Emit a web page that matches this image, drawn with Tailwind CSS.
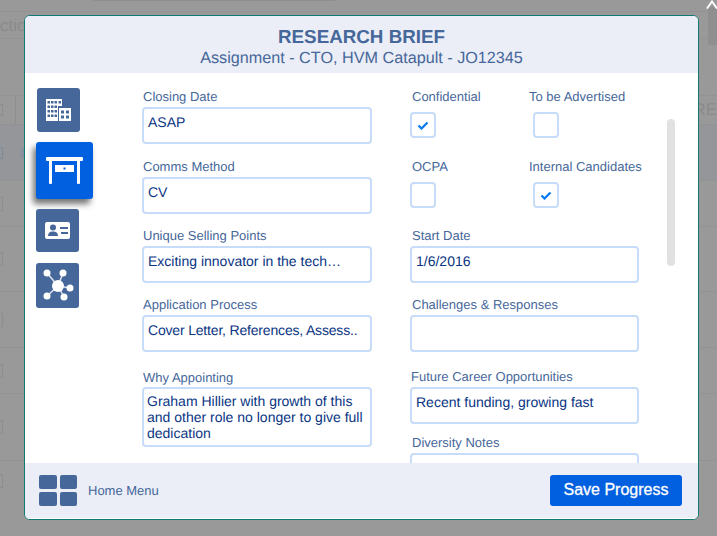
<!DOCTYPE html>
<html>
<head>
<meta charset="utf-8">
<script src="https://cdn.jsdelivr.net/npm/@tailwindcss/browser@4"></script>
</head>
<body class="bg-[#999999] font-['Liberation_Sans',Arial,sans-serif] overflow-hidden [text-rendering:geometricPrecision]">
<div class="relative w-[717px] h-[536px] overflow-hidden">

    <!-- faded page behind the modal -->
    <div class="h-[536px] text-[#8b8b8b]">
        <div class="h-[12px] border-b border-[#939393]"><div class="w-[242px] h-[1px] ml-[93px] bg-[#8e8e8e]"></div></div>
        <div class="h-[27px] border-b border-[#939393] flex justify-between text-[17px] leading-[27px]">
            <span>ction</span>
            <div class="w-[9px] h-[38px] -mt-[5px] rounded-bl-[3px] bg-[#8f8f8f]"></div>
        </div>
        <div class="h-[57px] border-b border-[#939393]"></div>
        <div class="h-[29px] border-b border-[#939393] flex justify-between text-[17px] leading-[27px]">
            <div class="w-[16px] border-r border-[#8e8e8e] flex items-center"><div class="w-[3px] h-[12px] border border-l-0 border-[#8e8e8e]"></div></div>
            <span>RE</span>
        </div>
        <div class="h-[56px] border-b border-[#939393] bg-[#949699] flex items-center gap-[18px]">
            <div class="w-[3px] h-[12px] border border-l-0 border-[#7f8a9a]"></div>
            <div class="w-[5px] h-[10px] bg-[#87909c]"></div>
        </div>
        <div class="h-[46px] border-b border-[#939393] flex items-center"><div class="w-[3px] h-[14px] border border-l-0 border-[#8e8e8e]"></div></div>
        <div class="h-[65px] border-b border-[#939393] flex items-center"><div class="w-[3px] h-[14px] border border-l-0 border-[#8e8e8e]"></div></div>
        <div class="h-[56px] border-b border-[#939393] flex items-center"><div class="w-[3px] h-[14px] border border-l-0 border-[#8e8e8e]"></div></div>
        <div class="h-[46px] border-b border-[#939393] flex items-center"><div class="w-[3px] h-[14px] border border-l-0 border-[#8e8e8e]"></div></div>
        <div class="h-[67px] border-b border-[#939393] flex items-center"><div class="w-[3px] h-[14px] border border-l-0 border-[#8e8e8e]"></div></div>
        <div class="h-[40px] flex items-center"><div class="w-[3px] h-[14px] border border-l-0 border-[#8e8e8e]"></div></div>
    </div>

    <!-- scroll-to-top arrow, top right of the page -->
    <svg class="absolute left-[706px] top-0" width="11" height="9" viewBox="0 0 11 9"><path d="M1 8.500L6 1.500L11 8.500" fill="none" stroke="#fff" stroke-width="2"/></svg>

    <!-- modal -->
    <div class="absolute left-[24px] top-[15px] w-[675px] h-[505px] bg-white border border-[#0f7a72] rounded-[6px] overflow-hidden flex flex-col">
        <div class="h-[57px] shrink-0 bg-[#ebeef7] text-center text-[#46679a]">
            <h1 class="text-[18.800px] font-bold leading-5 pt-[11px]">RESEARCH BRIEF</h1>
            <p class="text-[16.200px] leading-5 mt-[1px]">Assignment - CTO, HVM Catapult - JO12345</p>
        </div>

        <div class="relative h-[390px] shrink-0 overflow-hidden flex">
            <!-- side nav -->
            <div class="w-[117px] shrink-0 pt-[15px] pl-[11px] flex flex-col items-start">
                <div class="w-[43px] h-[44px] ml-[1px] rounded-[3px] bg-[#46679a] flex items-center justify-center">
                    <svg width="25" height="22" viewBox="0 0 25 22" fill="#fff">
                        <path fill-rule="evenodd" d="M0 0H16V7H12V22H0ZM1.500 2H4V4.500H1.500ZM5 2H7.500V4.500H5ZM8.500 2H11V4.500H8.500ZM12.500 2H15V4.500H12.500ZM1.500 6.500H4V9H1.500ZM5 6.500H7.500V9H5ZM8.500 6.500H11V9H8.500ZM1.500 11H4V13.500H1.500ZM5 11H7.500V13.500H5ZM8.500 11H11V13.500H8.500ZM1.500 15.500H4V18H1.500ZM5 15.500H7.500V18H5ZM8.500 15.500H11V18H8.500Z"/>
                        <path fill-rule="evenodd" d="M13 9H25V22H13ZM15 11.500H18V14.500H15ZM20 11.500H23V14.500H20ZM15 16.500H18V19.500H15ZM20 16.500H23V19.500H20Z"/>
                    </svg>
                </div>
                <div class="w-[57px] h-[57px] mt-[10px] rounded-[3px] bg-[#0060df] shadow-[-3px_5px_6px_rgba(0,0,0,0.55)] flex items-center justify-center">
                    <svg width="37" height="27" viewBox="0 0 37 27" fill="#fff">
                        <rect x="0" y="0" width="37" height="4" rx="1"/>
                        <rect x="3" y="3" width="3" height="24" rx="1"/>
                        <rect x="31" y="3" width="3" height="24" rx="1"/>
                        <path fill-rule="evenodd" d="M9 8H28V15H9ZM17.500 10.500H19.500V12.500H17.500Z"/>
                    </svg>
                </div>
                <div class="w-[43px] h-[43px] mt-[10px] rounded-[3px] bg-[#46679a] flex items-center justify-center">
                    <svg width="25" height="17" viewBox="0 0 25 17">
                        <rect width="25" height="17" rx="2" fill="#fff"/>
                        <circle cx="8" cy="5.500" r="3" fill="#46679a"/>
                        <path d="M3 14c.3-3.500 2-4.500 5-4.500s4.700 1 5 4.500z" fill="#46679a"/>
                        <rect x="15" y="5" width="8" height="2" fill="#46679a"/>
                        <rect x="16" y="10" width="7" height="2" fill="#46679a"/>
                    </svg>
                </div>
                <div class="w-[43px] h-[45px] mt-[11px] rounded-[3px] bg-[#46679a]">
                    <svg width="43" height="45" viewBox="0 0 43 45" fill="#fff">
                        <path stroke="#dfe5ef" stroke-width="1.500" d="M22 23L11 10M22 23L27 10M22 23L34 25M22 23L11 33M22 23L28 34"/>
                        <circle cx="22" cy="23" r="6"/>
                        <circle cx="11" cy="10" r="3.500"/>
                        <circle cx="27" cy="10" r="3.500"/>
                        <circle cx="34" cy="25" r="3.500"/>
                        <circle cx="11" cy="33" r="3.500"/>
                        <circle cx="28" cy="34" r="3.500"/>
                    </svg>
                </div>
            </div>

            <!-- left fields -->
            <div class="w-[230px] shrink-0 pt-[16px] text-[13px] text-[#46679a]">
                <label class="block leading-4 pl-[1px]">Closing Date</label>
                <div class="h-[37px] mt-[2px] border-2 border-[#c6dcf8] rounded-[4px] px-[4px] pt-[4px] text-[14px] leading-[18px] text-[#0a3583]">ASAP</div>
                <label class="block leading-4 pl-[1px] mt-[15px]">Comms Method</label>
                <div class="h-[37px] mt-[2px] border-2 border-[#c6dcf8] rounded-[4px] px-[4px] pt-[4px] text-[14px] leading-[18px] text-[#0a3583]">CV</div>
                <label class="block leading-4 pl-[1px] mt-[14px]">Unique Selling Points</label>
                <div class="h-[37px] mt-[2px] border-2 border-[#c6dcf8] rounded-[4px] px-[4px] pt-[4px] text-[14px] leading-[18px] text-[#0a3583]">Exciting innovator in the tech…</div>
                <label class="block leading-4 pl-[1px] mt-[14px]">Application Process</label>
                <div class="h-[37px] mt-[2px] border-2 border-[#c6dcf8] rounded-[4px] px-[4px] pt-[4px] text-[14px] leading-[18px] tracking-[-0.180px] text-[#0a3583] whitespace-nowrap">Cover Letter, References, Assess..</div>
                <label class="block leading-4 pl-[1px] mt-[18px]">Why Appointing</label>
                <div class="h-[60px] mt-[1px] border-2 border-[#c6dcf8] rounded-[4px] px-[3px] pt-[4px] text-[14px] leading-4 text-[#0a3583]">Graham Hillier with growth of this and other role no longer to give full dedication</div>
            </div>

            <!-- right fields -->
            <div class="w-[229px] ml-[38px] shrink-0 pt-[16px] text-[13px] text-[#46679a]">
                <div class="grid grid-cols-[119px_1fr] gap-y-[21px]">
                    <div class="pl-[2px]">
                        <label class="block leading-4 whitespace-nowrap">Confidential</label>
                        <div class="w-[26px] h-[26px] mt-[7px] -ml-[2px] border-2 border-[#c6dcf8] rounded-[4px] flex items-center justify-center">
                            <svg width="12" height="9" viewBox="0 0 12 9"><path d="M1.500 4.500L4.500 7.500L10.500 1.500" fill="none" stroke="#0a7cf0" stroke-width="2.300"/></svg>
                        </div>
                    </div>
                    <div>
                        <label class="block leading-4 whitespace-nowrap">To be Advertised</label>
                        <div class="w-[26px] h-[26px] mt-[7px] ml-[4px] border-2 border-[#c6dcf8] rounded-[4px]"></div>
                    </div>
                    <div class="pl-[2px]">
                        <label class="block leading-4 whitespace-nowrap">OCPA</label>
                        <div class="w-[26px] h-[26px] mt-[7px] -ml-[2px] border-2 border-[#c6dcf8] rounded-[4px]"></div>
                    </div>
                    <div>
                        <label class="block leading-4 whitespace-nowrap">Internal Candidates</label>
                        <div class="w-[26px] h-[26px] mt-[7px] ml-[4px] border-2 border-[#c6dcf8] rounded-[4px] flex items-center justify-center">
                            <svg width="12" height="9" viewBox="0 0 12 9"><path d="M1.500 4.500L4.500 7.500L10.500 1.500" fill="none" stroke="#0a7cf0" stroke-width="2.300"/></svg>
                        </div>
                    </div>
                </div>
                <label class="block leading-4 pl-[2px] mt-[20px]">Start Date</label>
                <div class="h-[37px] mt-[2px] border-2 border-[#c6dcf8] rounded-[4px] px-[4px] pt-[4px] text-[14px] leading-[18px] text-[#0a3583]">1/6/2016</div>
                <label class="block leading-4 pl-[2px] mt-[14px]">Challenges &amp; Responses</label>
                <div class="h-[37px] mt-[2px] border-2 border-[#c6dcf8] rounded-[4px]"></div>
                <label class="block leading-4 pl-[1px] mt-[17px]">Future Career Opportunities</label>
                <div class="h-[37px] mt-[2px] border-2 border-[#c6dcf8] rounded-[4px] px-[4px] pt-[4px] text-[14px] leading-[18px] text-[#0a3583]">Recent funding, growing fast</div>
                <label class="block leading-4 pl-[2px] mt-[11px]">Diversity Notes</label>
                <div class="h-[37px] mt-[2px] border-2 border-[#c6dcf8] rounded-[4px]"></div>
            </div>

            <!-- scrollbar -->
            <div class="absolute left-[642px] top-[46px] w-[8px] h-[147px] rounded-[4px] bg-[#e1e1e1]"></div>
        </div>

        <div class="flex-1 bg-[#ebeef7] border-b border-white flex items-center justify-between pl-[14px] pr-[16px] text-[#46679a]">
            <div class="flex items-center">
                <div class="grid grid-cols-[18px_17px] grid-rows-[14px_14px] gap-[3px]">
                    <div class="bg-[#46679a] rounded-[2px]"></div>
                    <div class="bg-[#46679a] rounded-[2px]"></div>
                    <div class="bg-[#46679a] rounded-[2px]"></div>
                    <div class="bg-[#46679a] rounded-[2px]"></div>
                </div>
                <span class="ml-[11px] text-[13px]">Home Menu</span>
            </div>
            <button class="w-[132px] h-[31px] -mt-[1px] bg-[#0060df] rounded-[3px] text-white text-[16px] [-webkit-text-stroke:0.3px_white]">Save Progress</button>
        </div>
    </div>
</div>
</body>
</html>
